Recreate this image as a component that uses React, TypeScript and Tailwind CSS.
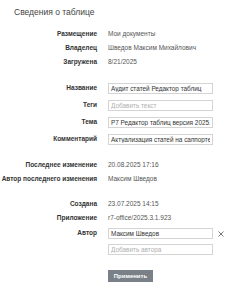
import React from "react";

type InfoRow = { label: string; value: string };

const top: InfoRow[] = [
  { label: "Размещение", value: "Мои документы" },
  { label: "Владелец", value: "Шведов Максим Михайлович" },
  { label: "Загружена", value: "8/21/2025" },
];

const fields = [
  { label: "Название", value: "Аудит статей Редактор таблиц", placeholder: "" },
  { label: "Теги", value: "", placeholder: "Добавить текст" },
  { label: "Тема", value: "Р7 Редактор таблиц версия 2025.3.1.923", placeholder: "" },
  { label: "Комментарий", value: "Актуализация статей на саппорте", placeholder: "" },
];

const changes: InfoRow[] = [
  { label: "Последнее изменение", value: "20.08.2025 17:16" },
  { label: "Автор последнего изменения", value: "Максим Шведов" },
];

const created: InfoRow[] = [
  { label: "Создана", value: "23.07.2025 14:15" },
  { label: "Приложение", value: "r7-office/2025.3.1.923" },
];

function Label({ children }: { children: React.ReactNode }) {
  return (
    <div className="w-[97px] shrink-0 text-right font-bold text-[#333] whitespace-nowrap">
      {children}
    </div>
  );
}

function Row({ label, value }: InfoRow) {
  return (
    <div className="flex h-[14px] items-center">
      <Label>{label}</Label>
      <div className="ml-[11px] text-[#555] whitespace-nowrap">{value}</div>
    </div>
  );
}

function Field({
  value,
  placeholder,
}: {
  value: string;
  placeholder?: string;
}) {
  return (
    <input
      readOnly
      value={value}
      placeholder={placeholder}
      className="h-[11px] w-[105px] border border-[#d4d4d4] bg-white px-[2px] text-[6.4px] text-[#333] outline-none placeholder:text-[#b0b0b0]"
    />
  );
}

export default function App() {
  return (
    <main
      className="w-[251px] h-[300px] bg-white text-[6.5px] leading-none"
      style={{ fontFamily: '"Liberation Sans", Arial, sans-serif' }}
    >
      <h1 className="pl-[14px] pt-[7px] text-[8.5px] leading-[10px] text-[#444] font-normal">
        Сведения о таблице
      </h1>

      <div className="mt-[10px]">
        {top.map((r) => (
          <Row key={r.label} {...r} />
        ))}
      </div>

      <div className="mt-[14px] flex flex-col gap-[6px]">
        {fields.map((f) => (
          <div key={f.label} className="flex items-center">
            <Label>{f.label}</Label>
            <div className="ml-[11px]">
              <Field value={f.value} placeholder={f.placeholder} />
            </div>
          </div>
        ))}
      </div>

      <div className="mt-[13px]">
        {changes.map((r) => (
          <Row key={r.label} {...r} />
        ))}
      </div>

      <div className="mt-[11px]">
        {created.map((r) => (
          <Row key={r.label} {...r} />
        ))}
      </div>

      <div className="mt-[3px] flex">
        <div className="flex h-[11px] items-center">
          <Label>Автор</Label>
        </div>
        <div className="ml-[11px] flex flex-col gap-[5px]">
          <div className="flex items-center">
            <Field value="Максим Шведов" />
            <svg
              className="ml-[5px]"
              width="6"
              height="6"
              viewBox="0 0 6 6"
              stroke="#666"
              strokeWidth="0.9"
            >
              <path d="M0.5 0.5L5.5 5.5M5.5 0.5L0.5 5.5" />
            </svg>
          </div>
          <Field value="" placeholder="Добавить автора" />
          <button className="mt-[10px] h-[12px] w-[45px] bg-[#7a8087] text-[6px] font-bold text-white">
            Применить
          </button>
        </div>
      </div>
    </main>
  );
}
